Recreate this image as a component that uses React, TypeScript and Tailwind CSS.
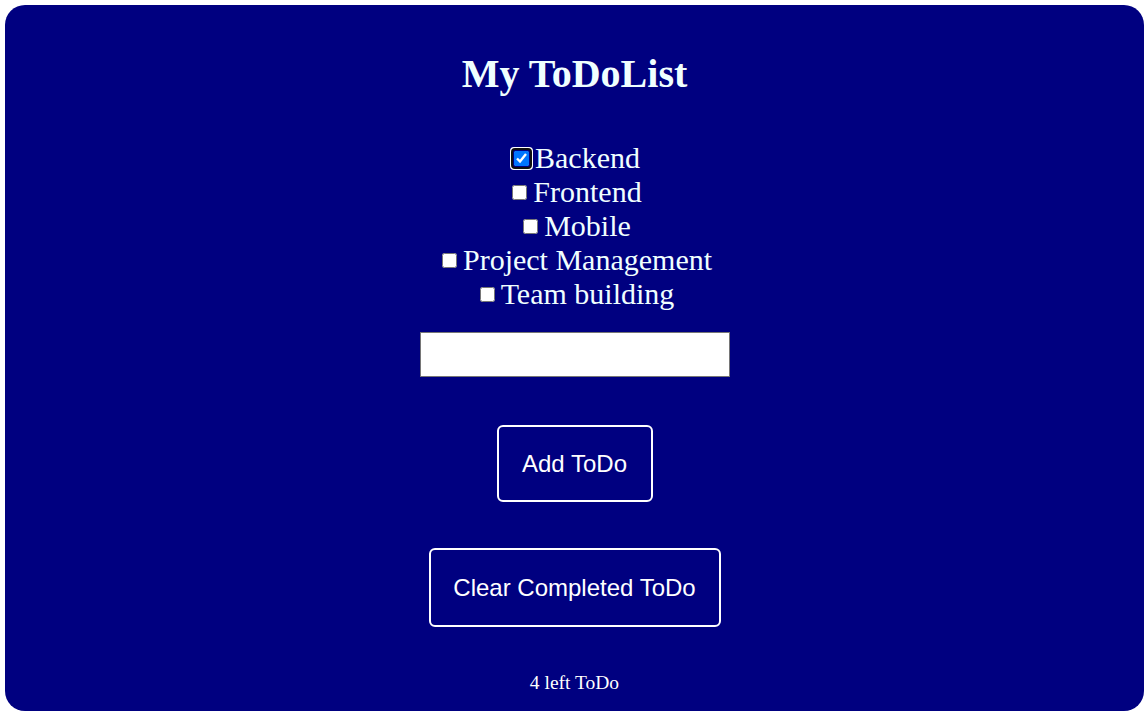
import { useState } from 'react';

const initialTodos = [
  { id: 1, text: 'Backend', done: true },
  { id: 2, text: 'Frontend', done: false },
  { id: 3, text: 'Mobile', done: false },
  { id: 4, text: 'Project Management', done: false },
  { id: 5, text: 'Team building', done: false },
];

export default function App() {
  const [todos, setTodos] = useState(initialTodos);
  const [draft, setDraft] = useState('');

  const toggle = (id: number) =>
    setTodos(todos.map((t) => (t.id === id ? { ...t, done: !t.done } : t)));

  const addTodo = () => {
    if (!draft.trim()) return;
    setTodos([...todos, { id: Date.now(), text: draft, done: false }]);
    setDraft('');
  };

  const clearCompleted = () => setTodos(todos.filter((t) => !t.done));

  const left = todos.filter((t) => !t.done).length;

  return (
    <div className="bg-white w-[1148px] h-[713px] pt-[5px] pl-[5px]">
      <div className="w-[1139px] h-[706px] rounded-[20px] bg-[#000080] flex flex-col items-center font-['Liberation_Serif',serif] text-[azure]">
        <h1 className="mt-[46px] text-[40px] leading-[46px] font-bold">My ToDoList</h1>

        <ul className="mt-[44px] flex flex-col items-center">
          {todos.map((t) => (
            <li key={t.id} className="flex items-center text-[30px] leading-[34px]">
              <input
                type="checkbox"
                checked={t.done}
                onChange={() => toggle(t.id)}
                autoFocus={t.id === 1}
                className="w-[15px] h-[15px] ml-[5px] mr-[6px]"
              />
              <span>{t.text}</span>
            </li>
          ))}
        </ul>

        <input
          type="text"
          value={draft}
          onChange={(e) => setDraft(e.target.value)}
          className="mt-[21px] w-[310px] h-[45px] bg-white border border-[#767676] text-black px-2 font-['Liberation_Sans',sans-serif]"
        />

        <button
          onClick={addTodo}
          className="mt-[48px] w-[156px] h-[77px] border-2 border-white rounded-[6px] text-white text-[24px] font-['Liberation_Sans',sans-serif]"
        >
          Add ToDo
        </button>

        <button
          onClick={clearCompleted}
          className="mt-[46px] w-[292px] h-[79px] border-2 border-white rounded-[6px] text-white text-[24px] font-['Liberation_Sans',sans-serif]"
        >
          Clear Completed ToDo
        </button>

        <p className="mt-[45px] text-[19.5px] leading-[22px] text-white">{left} left ToDo</p>
      </div>
    </div>
  );
}
